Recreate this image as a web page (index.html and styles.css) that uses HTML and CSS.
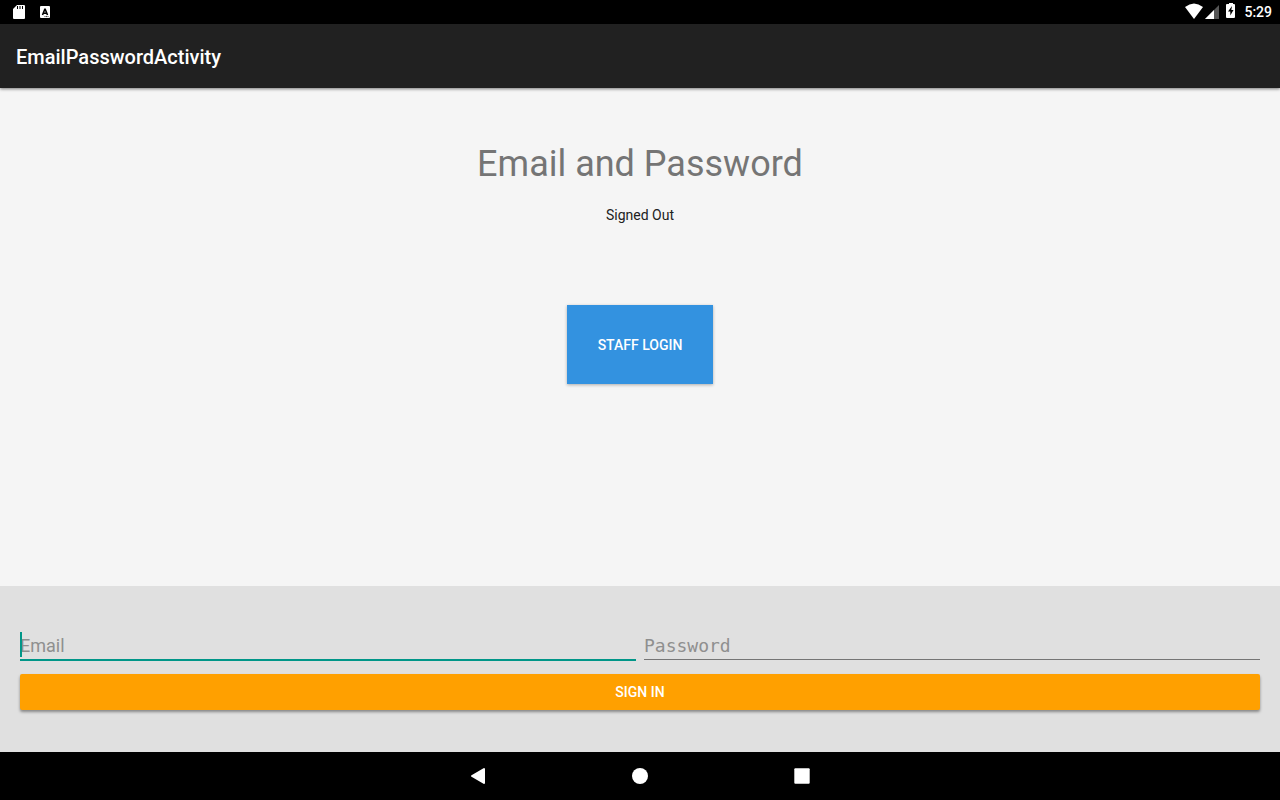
FILE: index.html
```
<!DOCTYPE html>
<html lang="en">
<head>
    <meta charset="UTF-8">
    <meta name="viewport" content="width=device-width, initial-scale=1.0">
    <title>EmailPasswordActivity</title>
    <link rel="stylesheet" href="styles.css">
</head>
<body>

    <div class="status-bar">
        <div class="status-left">
            <!-- SD card -->
            <svg width="12" height="14" viewBox="0 0 12 14">
                <path fill="#fff" d="M4 0h7q1 0 1 1v12q0 1-1 1H1q-1 0-1-1V4z"/>
                <path stroke="#000" d="M4.500 1v3M7 1v3M9.500 1v3"/>
            </svg>
            <!-- Keyboard notification -->
            <svg width="12" height="12" viewBox="0 0 12 12">
                <rect x="1" width="10" height="12" rx="1" fill="#fff"/>
                <path fill="none" stroke="#000" stroke-width="1.600" d="M3.500 9L5.800 3.200h.4L8.500 9M4.500 7.200h3"/>
                <path stroke="#000" stroke-width=".8" d="M5.500 10.600h1M7 10.600h1M8.500 10.600h1"/>
            </svg>
        </div>
        <div class="status-right">
            <svg width="46" height="16" viewBox="0 0 46 16">
                <path fill="#fff" d="M0 4Q9-3 18 4L9 16z"/>
                <path fill="#555" d="M34 2v14H20z"/>
                <path fill="#fff" d="M29 7v9H20z"/>
            </svg>
            <svg class="battery" width="10" height="16" viewBox="0 0 10 16">
                <path fill="#fff" d="M3 0h4v1h1q1 0 1 1v12q0 1-1 1H1q-1 0-1-1V2q0-1 1-1h2z"/>
                <path fill="#000" d="M6 3L2 8.500h2.300v4L7.500 7H5.300z"/>
            </svg>
            <span>5:29</span>
        </div>
    </div>

    <header class="app-bar">EmailPasswordActivity</header>

    <main class="content">
        <h1>Email and Password</h1>
        <p class="status">Signed Out</p>
        <button type="button" class="staff-btn">STAFF LOGIN</button>
    </main>

    <form class="login-form">
        <div class="fields">
            <div class="field active">
                <input type="email" id="email" placeholder="Email" aria-label="Email">
                <span class="cursor"></span>
            </div>
            <div class="field">
                <input type="password" id="password" placeholder="Password" aria-label="Password">
            </div>
        </div>
        <button type="submit" class="sign-in-btn">SIGN IN</button>
    </form>

    <nav class="nav-bar">
        <button type="button" aria-label="Back">
            <svg width="18" height="18" viewBox="0 0 18 18">
                <path fill="#fff" stroke="#fff" stroke-width="2" stroke-linejoin="round" d="M3 9L15 2v14z"/>
            </svg>
        </button>
        <button type="button" aria-label="Home">
            <svg width="18" height="18" viewBox="0 0 18 18">
                <circle cx="9" cy="9" r="8" fill="#fff"/>
            </svg>
        </button>
        <button type="button" aria-label="Recent apps">
            <svg width="18" height="18" viewBox="0 0 18 18">
                <rect x="1.300" y="1.300" width="15.400" height="15.400" rx="1" fill="#fff"/>
            </svg>
        </button>
    </nav>

</body>
</html>
```
FILE: styles.css
```
* {
    box-sizing: border-box;
}

body {
    display: flex;
    flex-direction: column;
    min-height: 100vh;
    margin: 0;
    font-family: Roboto, sans-serif;
    background-color: #f5f5f5;
}

button {
    border: none;
    font-family: inherit;
    cursor: pointer;
}

svg {
    display: block;
}

/* Status bar */
.status-bar {
    display: flex;
    justify-content: space-between;
    align-items: center;
    height: 24px;
    padding: 0 8px 0 13px;
    background-color: #000000;
    color: #ffffff;
    font-size: 14px;
    font-weight: 500;
}

.status-left,
.status-right {
    display: flex;
    align-items: center;
}

.status-left {
    gap: 14px;
}

.status-right svg {
    margin-bottom: 2px;
}

.status-right .battery {
    margin: 0 8px 2px -5px;
}

/* App bar */
.app-bar {
    height: 64px;
    padding: 0 16px;
    background-color: #212121;
    color: #ffffff;
    font-size: 20px;
    font-weight: 500;
    line-height: 66px;
    box-shadow: 0 1px 3px rgba(0, 0, 0, 0.5);
}

/* Main content */
.content {
    display: flex;
    flex: 1;
    flex-direction: column;
    align-items: center;
    padding: 55px 16px 16px;
}

h1 {
    margin: 0;
    color: #757575;
    font-size: 36px;
    font-weight: 400;
    line-height: 42px;
}

.status {
    margin: 21px 0 0;
    color: #212121;
    font-size: 14px;
    line-height: 18px;
}

.staff-btn {
    margin-top: 81px;
    padding: 31px 31px 29px;
    background-color: #3392e0;
    color: #ffffff;
    font-size: 14px;
    font-weight: 500;
    line-height: 19px;
    box-shadow: 0 1px 3px rgba(0, 0, 0, 0.3);
}

/* Login form */
.login-form {
    padding: 40px 20px 42px;
    background-color: #e0e0e0;
}

.fields {
    display: flex;
    gap: 8px;
}

.field {
    position: relative;
    flex: 1;
}

.field input {
    display: block;
    width: 100%;
    height: 34px;
    padding: 6px 0 0;
    border: none;
    border-bottom: 1px solid #757575;
    background: none;
    font-family: Roboto, sans-serif;
    font-size: 18px;
    outline: none;
}

.field.active input {
    height: 35px;
    border-bottom: 2px solid #009688;
}

.field input[type="password"] {
    font-family: "DejaVu Sans Mono", monospace;
}

.field input::placeholder {
    color: #8f8f8f;
    opacity: 1;
}

/* Text caret of the focused field */
.cursor {
    position: absolute;
    top: 6px;
    left: 0;
    width: 2px;
    height: 25px;
    background-color: #009688;
}

.sign-in-btn {
    display: block;
    width: 100%;
    height: 36px;
    margin-top: 13px;
    border-radius: 2px;
    background-color: #ffa000;
    color: #ffffff;
    font-size: 14px;
    font-weight: 500;
    box-shadow: 0 2px 3px rgba(0, 0, 0, 0.4);
}

/* Navigation bar */
.nav-bar {
    display: flex;
    justify-content: center;
    align-items: center;
    gap: 144px;
    height: 48px;
    background-color: #000000;
}

.nav-bar button {
    padding: 0;
    background: none;
}
```
